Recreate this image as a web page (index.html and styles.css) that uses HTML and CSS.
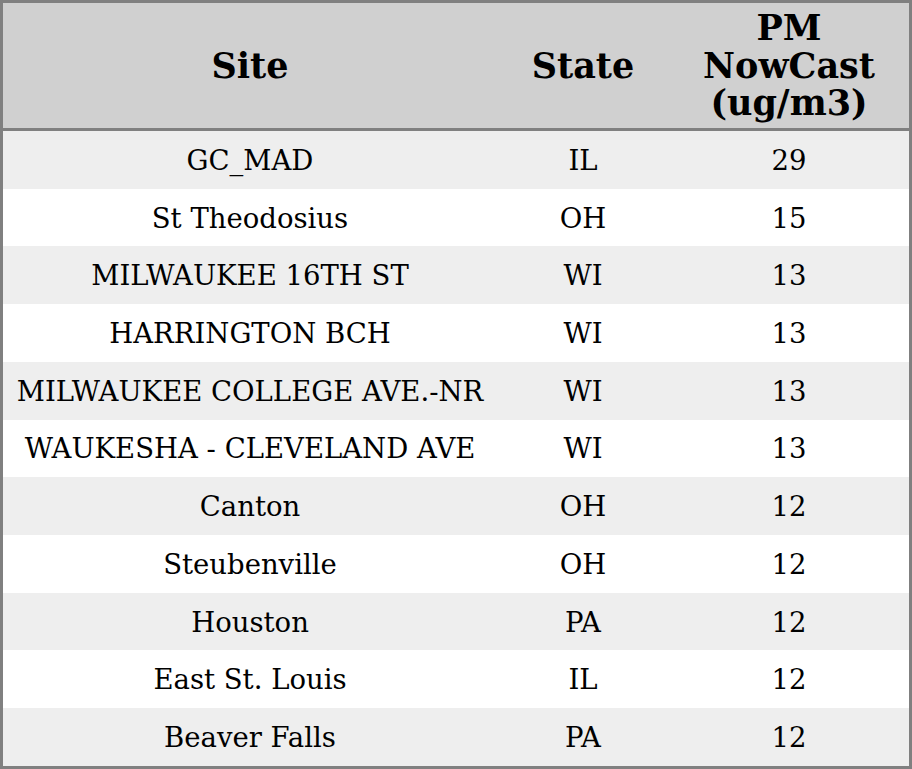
FILE: index.html
```html
<!DOCTYPE html>
<html>
<head>
<meta charset="utf-8">
<link rel="stylesheet" href="styles.css">
</head>
<body>
<table class="aq-table">
  <colgroup>
    <col class="col-site">
    <col class="col-state">
    <col class="col-pm">
  </colgroup>
  <thead>
    <tr>
      <th>Site</th>
      <th>State</th>
      <th>PM<br>NowCast<br>(ug/m3)</th>
    </tr>
  </thead>
  <tbody>
    <tr><td>GC_MAD</td><td>IL</td><td>29</td></tr>
    <tr><td>St Theodosius</td><td>OH</td><td>15</td></tr>
    <tr><td>MILWAUKEE 16TH ST</td><td>WI</td><td>13</td></tr>
    <tr><td>HARRINGTON BCH</td><td>WI</td><td>13</td></tr>
    <tr><td>MILWAUKEE COLLEGE AVE.-NR</td><td>WI</td><td>13</td></tr>
    <tr><td>WAUKESHA - CLEVELAND AVE</td><td>WI</td><td>13</td></tr>
    <tr><td>Canton</td><td>OH</td><td>12</td></tr>
    <tr><td>Steubenville</td><td>OH</td><td>12</td></tr>
    <tr><td>Houston</td><td>PA</td><td>12</td></tr>
    <tr><td>East St. Louis</td><td>IL</td><td>12</td></tr>
    <tr><td>Beaver Falls</td><td>PA</td><td>12</td></tr>
  </tbody>
</table>
</body>
</html>
```

FILE: styles.css
```css
html, body {
  margin: 0;
  padding: 0;
  background: #ffffff;
}

.aq-table {
  width: 912px;
  border-collapse: separate;
  border-spacing: 0;
  border: 3px solid #808080;
  table-layout: fixed;
  font-family: "DejaVu Serif", serif;
  color: #000;
}

.col-site { width: 494px; }
.col-state { width: 172px; }
.col-pm { width: 240px; }

.aq-table th {
  background: #d0d0d0;
  font-size: 35px;
  font-weight: bold;
  line-height: 37.5px;
  height: 128px;
  box-sizing: border-box;
  padding: 0;
  text-align: center;
  vertical-align: middle;
  border-bottom: 3px solid #808080;
}

.aq-table td {
  font-size: 27.5px;
  line-height: 32px;
  height: 57.73px;
  padding: 0;
  text-align: center;
  vertical-align: middle;
}

.aq-table tbody tr:nth-child(odd) td {
  background: #eeeeee;
}

.aq-table tbody tr:nth-child(even) td {
  background: #ffffff;
}
```
